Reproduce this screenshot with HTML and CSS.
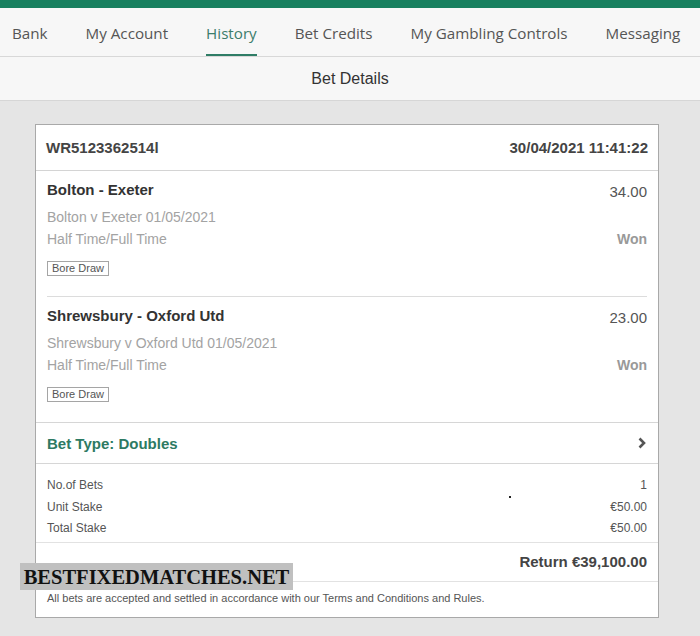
FILE: index.html
```html
<!DOCTYPE html>
<html lang="en">
<head>
	<meta charset="utf-8">
	<title>Bet Details</title>
	<link rel="stylesheet" href="styles.css">
</head>
<body>

	<div class="topbar"></div>

	<nav class="tabs">
		<a>Bank</a>
		<a>My Account</a>
		<a class="active">History</a>
		<a>Bet Credits</a>
		<a>My Gambling Controls</a>
		<a>Messaging</a>
	</nav>

	<div class="subtitle">Bet Details</div>

	<main class="content">

		<div class="card">

			<div class="card-head">
				<span>WR5123362514l</span>
				<span>30/04/2021 11:41:22</span>
			</div>

			<div class="selection">
				<div class="row">
					<span class="sel-name">Bolton - Exeter</span>
					<span class="odds">34.00</span>
				</div>
				<div class="muted event">Bolton v Exeter 01/05/2021</div>
				<div class="row muted">
					<span>Half Time/Full Time</span>
					<span class="result">Won</span>
				</div>
				<div class="tag">Bore Draw</div>
			</div>

			<div class="selection">
				<div class="row">
					<span class="sel-name">Shrewsbury - Oxford Utd</span>
					<span class="odds">23.00</span>
				</div>
				<div class="muted event">Shrewsbury v Oxford Utd 01/05/2021</div>
				<div class="row muted">
					<span>Half Time/Full Time</span>
					<span class="result">Won</span>
				</div>
				<div class="tag">Bore Draw</div>
			</div>

			<div class="bet-type">
				<span>Bet Type: Doubles</span>
				<svg width="10" height="12" viewBox="0 0 10 12"><path d="M2.5 1.5 L7 6 L2.5 10.5" fill="none" stroke="#555" stroke-width="2.6"/></svg>
			</div>

			<div class="summary">
				<div class="row"><span>No.of Bets</span><span>1</span></div>
				<div class="row"><span>Unit Stake</span><span>€50.00</span></div>
				<div class="row"><span>Total Stake</span><span>€50.00</span></div>
				<i class="speck"></i>
			</div>

			<div class="return">Return €39,100.00</div>

			<div class="terms">All bets are accepted and settled in accordance with our Terms and Conditions and Rules.</div>

		</div>

		<div class="watermark">BESTFIXEDMATCHES.NET</div>

	</main>

</body>
</html>
```

FILE: styles.css
```css
html, body {
	margin: 0;
	background: #e5e5e5;
	font-family: "Liberation Sans", Arial, sans-serif;
	color: #333333;
}

.topbar {
	height: 8px;
	background: #18805f;
}

.tabs {
	display: flex;
	gap: 38px;
	height: 48px;
	padding: 0 12px;
	background: #f7f7f7;
	border-bottom: 1px solid #d8d8d8;
	font-family: "Open Sans", sans-serif;
	font-size: 15.2px;
	white-space: nowrap;
}

.tabs a {
	display: flex;
	align-items: center;
	box-sizing: border-box;
	height: 100%;
	padding-top: 4px;
	border-bottom: 2px solid transparent;
	color: #555555;
}

.tabs a.active {
	color: #3c7d6b;
	border-bottom-color: #2f7d66;
}

.subtitle {
	height: 43px;
	line-height: 43px;
	text-align: center;
	background: #f7f7f7;
	border-bottom: 1px solid #d6d6d6;
	font-size: 16px;
	color: #333333;
}

.content {
	position: relative;
	padding: 23px 0 20px 35px;
}

.card {
	width: 622px;
	background: #ffffff;
	border: 1px solid #a9a9a9;
}

.card-head {
	display: flex;
	justify-content: space-between;
	align-items: center;
	height: 45px;
	padding: 0 10px;
	border-bottom: 1px solid #d4d4d4;
	font-size: 15px;
	font-weight: bold;
	color: #444444;
}

.row {
	display: flex;
	justify-content: space-between;
}

.selection {
	margin: 0 11px;
	padding: 8px 0 20px;
}

.selection + .selection {
	border-top: 1px solid #dcdcdc;
}

.selection > .row:first-child {
	height: 22px;
	line-height: 22px;
}

.sel-name {
	font-size: 15px;
	font-weight: bold;
	color: #333333;
}

.odds {
	font-size: 15px;
	line-height: 19px;
	padding-top: 3px;
	color: #555555;
}

.muted {
	font-size: 14px;
	line-height: 22px;
	color: #a3a3a3;
}

.event {
	margin-top: 5px;
}

.result {
	font-weight: bold;
	color: #999999;
}

.tag {
	width: fit-content;
	margin-top: 11px;
	padding: 0 4px;
	height: 13px;
	line-height: 13px;
	border: 1px solid #a5a5a5;
	font-size: 11px;
	color: #555555;
}

.bet-type {
	display: flex;
	justify-content: space-between;
	align-items: center;
	height: 40px;
	padding: 0 11px;
	border-top: 1px solid #d6d6d6;
	border-bottom: 1px solid #d6d6d6;
	font-size: 15px;
	font-weight: bold;
	color: #2d7a63;
}

.summary {
	position: relative;
	padding: 11px 11px 2px;
	border-bottom: 1px solid #e2e2e2;
	font-size: 12px;
	line-height: 21.5px;
	color: #555555;
}

.speck {
	position: absolute;
	left: 473px;
	top: 32px;
	width: 2px;
	height: 2px;
	background: #222222;
}

.return {
	height: 38px;
	line-height: 37px;
	padding: 0 11px;
	text-align: right;
	border-bottom: 1px solid #e2e2e2;
	font-size: 15px;
	font-weight: bold;
	color: #444444;
}

.terms {
	height: 35px;
	line-height: 33px;
	padding: 0 11px;
	font-size: 11px;
	color: #555555;
}

.watermark {
	position: absolute;
	left: 20px;
	top: 462px;
	width: 273px;
	height: 27px;
	line-height: 28px;
	background: #c0c0c0;
	font-family: "Liberation Serif", serif;
	font-size: 20.5px;
	font-weight: bold;
	color: #111111;
	text-align: center;
}
```
